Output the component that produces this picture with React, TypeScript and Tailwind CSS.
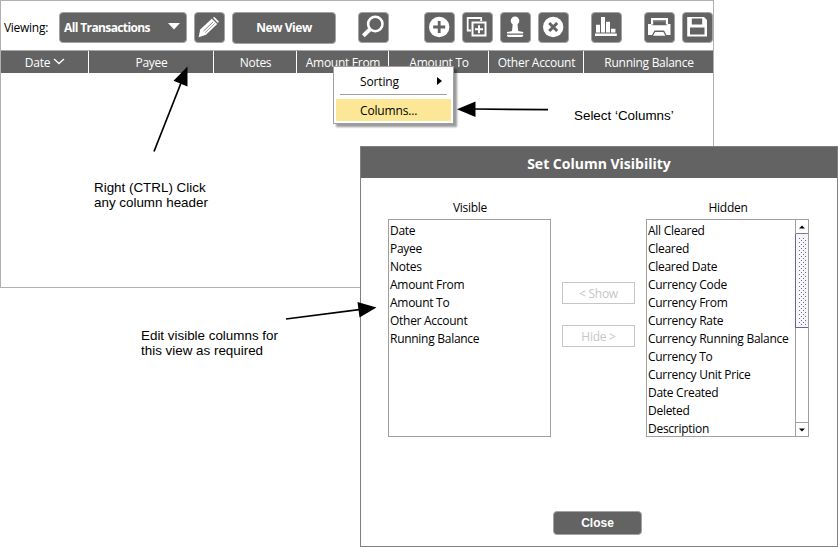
import type { ReactNode } from "react";

const visible = ["Date", "Payee", "Notes", "Amount From", "Amount To", "Other Account", "Running Balance"];
const hidden = [
  "All Cleared", "Cleared", "Cleared Date", "Currency Code", "Currency From", "Currency Rate",
  "Currency Running Balance", "Currency To", "Currency Unit Price", "Date Created", "Deleted", "Description",
];

function IconButton({ children, className = "" }: { children: ReactNode; className?: string }) {
  return (
    <button className={`h-[31px] w-[31px] shrink-0 rounded-[4px] border border-[#a3a3a3] bg-[#636363] ${className}`}>
      <svg className="-m-px block h-[31px] w-[31px]" viewBox="0 0 31 31" fill="none">{children}</svg>
    </button>
  );
}

function HeaderCell({ label, className, children }: { label: string; className: string; children?: ReactNode }) {
  return (
    <div className={`flex h-full shrink-0 items-center justify-center pt-px pl-px whitespace-nowrap ${className}`}>
      {label}
      {children}
    </div>
  );
}

function Toolbar() {
  return (
    <div className="flex h-[49px] items-start pt-[11px] pl-[3px]">
      <span className="w-[55px] shrink-0 pt-[7px] leading-[18px]">Viewing:</span>
      <button className="flex h-[31px] w-[128px] shrink-0 items-center justify-between rounded-[4px] border border-[#a3a3a3] bg-[#636363] pr-[6px] pl-[4px] font-bold text-white">
        <span className="whitespace-nowrap tracking-[-0.62px]">All Transactions</span>
        <svg width="12" height="7" viewBox="0 0 12 7" className="mb-[2px]"><path d="M0 0h12L6 6.5z" fill="#fff" /></svg>
      </button>
      <IconButton className="ml-[7px]">
        <path d="M4.6 25.2l1.6-7.6L17.8 6.8l5.4 5.2L12 22.8z" fill="#fff" />
        <path d="M18.8 5.8l1.6-.9 4.4 4.5-.8 1.7z" fill="#fff" />
        <path d="M9.5 19L19 10" stroke="#636363" strokeWidth="0.8" />
        <path d="M11 20.6L20.8 11.4" stroke="#636363" strokeWidth="0.6" />
      </IconButton>
      <button className="ml-[7px] h-[32px] w-[104px] shrink-0 rounded-[4px] border border-[#a3a3a3] bg-[#636363] pb-[1px] font-bold tracking-[-0.45px] text-white">New View</button>
      <IconButton className="ml-[22px]">
        <circle cx="17.3" cy="12" r="7.2" stroke="#fff" strokeWidth="2.6" />
        <path d="M11.8 17.5l-6.5 6.3" stroke="#fff" strokeWidth="4" />
      </IconButton>
      <IconButton className="ml-[35px]">
        <circle cx="15.2" cy="15" r="10.2" fill="#fff" />
        <path d="M15.2 9v12M9.2 15h12" stroke="#636363" strokeWidth="2.8" />
      </IconButton>
      <IconButton className="ml-[7px]">
        <path d="M9 18.5H5.7V6h13.5v3" stroke="#fff" strokeWidth="1.8" />
        <rect x="10.5" y="10.5" width="13" height="13" stroke="#fff" strokeWidth="2" />
        <path d="M17 13.2v8M13 17.2h8" stroke="#fff" strokeWidth="2" />
      </IconButton>
      <IconButton className="ml-[7px]">
        <circle cx="15" cy="8.8" r="4.3" fill="#fff" />
        <path d="M12.8 11h4.6l.8 8 5 1.1v1.5H7v-1.5l5-1.1zM7 22.7h16.2v1.2L21.9 25H8.3L7 23.9z" fill="#fff" />
      </IconButton>
      <IconButton className="ml-[7px]">
        <circle cx="15.2" cy="15" r="10.2" fill="#fff" />
        <path d="M11.2 11l8 8M19.2 11l-8 8" stroke="#636363" strokeWidth="3" />
      </IconButton>
      <IconButton className="ml-[22px]">
        <path d="M5 12.7h4v7.8H5zM10 5h4v15.5h-4zM15 9.7h4v10.8h-4zM20 16.7h4.4v3.8H20zM4 21.6h21.8V24H4z" fill="#fff" />
      </IconButton>
      <IconButton className="ml-[22px]">
        <path d="M7 6h17v6.5h-2.2v-3H9.2v3H7z" fill="#fff" />
        <path d="M4 12h3l1.3 1.2h14.4L24 12h2.5v11h-4L20 18.5H10.5L8 23H4z" fill="#fff" />
        <path d="M11.2 20h8.2l2 3.8H8.9z" fill="#fff" />
        <path d="M9 9h13" stroke="#636363" strokeWidth="1.4" />
      </IconButton>
      <IconButton className="ml-[7px]">
        <path d="M5.2 5H22l3 3V24.6H5.2z" fill="#fff" />
        <path d="M9.8 6.5h10.4v6H9.8zM8 15.6h14.5v7H8z" fill="#636363" />
      </IconButton>
    </div>
  );
}

function ContextMenu() {
  return (
    <div className="absolute top-[66px] left-[333px] h-[58px] w-[121px] border border-[#a0a0a0] bg-white p-[2px] shadow-[3px_3px_2px_rgba(0,0,0,0.4)]">
      <div className="flex h-[24px] items-center justify-between pt-px pr-[9px] pl-[24px]">
        <span className="tracking-[-0.15px]">Sorting</span>
        <svg width="5" height="8" viewBox="0 0 5 8" className="mb-[2px]"><path d="M0 0l5 4-5 4z" /></svg>
      </div>
      <div className="mx-[4px] mt-px h-px bg-[#a0a0a0]" />
      <div className="mt-[4px] flex h-[22px] items-center bg-[#fbe795] pt-[2px] pl-[24px] tracking-[-0.15px]">Columns...</div>
    </div>
  );
}

function ListRows({ items }: { items: string[] }) {
  return (
    <div className="flex-1 overflow-hidden pt-[2px] pl-[1px]">
      {items.map((item) => (
        <div key={item} className="h-[18px] leading-[18px] whitespace-nowrap">{item}</div>
      ))}
    </div>
  );
}

function Scrollbar() {
  return (
    <div className="flex w-[13px] flex-col border-l border-[#a0a0a0]">
      <div className="flex h-[14px] shrink-0 items-center justify-center border-b border-[#777799]">
        <svg width="6" height="4" viewBox="0 0 6 4"><path d="M0 3.5L3 .5l3 3z" /></svg>
      </div>
      <div className="-ml-px h-[94px] border-b border-l border-[#666699] bg-[#f7f7fa] pt-[4px] pr-[1px] pb-[2px] pl-[3px]">
        <svg className="block h-full w-full">
          <defs>
            <pattern id="grip" width="4" height="4" patternUnits="userSpaceOnUse">
              <path d="M0 0h1v1H0zM2 2h1v1H2z" fill="#666699" />
            </pattern>
          </defs>
          <rect width="100%" height="100%" fill="url(#grip)" />
        </svg>
      </div>
      <div className="flex-1" />
      <div className="flex h-[14px] items-center justify-center border-t border-[#a0a0a0]">
        <svg width="6" height="4" viewBox="0 0 6 4"><path d="M0 .5h6l-3 3z" /></svg>
      </div>
    </div>
  );
}

function Dialog() {
  return (
    <div className="absolute top-[146px] left-[360px] flex h-[401px] w-[478px] flex-col border border-[#808080] bg-white">
      <div className="flex h-[31px] w-full items-center justify-center bg-[#636363] pt-[2px] text-[14px] font-bold tracking-normal text-white">
        Set Column Visibility
      </div>
      <div className="flex w-full pt-[20px] pl-[27px]">
        <div className="w-[163px]">
          <div className="h-[21px] pt-px pl-px text-center leading-[18px]">Visible</div>
          <div className="flex h-[218px] border border-[#a0a0a0]"><ListRows items={visible} /></div>
        </div>
        <div className="ml-[11px] flex w-[73px] flex-col gap-[21px] pt-[84px]">
          <button className="h-[22px] border border-[#c6c6c6] pt-[2px] text-[#c6c6c6]">&lt; Show</button>
          <button className="h-[22px] border border-[#c6c6c6] pt-[2px] text-[#c6c6c6]">Hide &gt;</button>
        </div>
        <div className="ml-[11px] w-[163px]">
          <div className="h-[21px] pt-px pl-px text-center leading-[18px]">Hidden</div>
          <div className="flex h-[218px] border border-[#a0a0a0]"><ListRows items={hidden} /><Scrollbar /></div>
        </div>
      </div>
      <button className="mt-[74px] ml-[192px] h-[24px] w-[89px] shrink-0 rounded-[4px] border border-[#a3a3a3] bg-[#636363] pb-px font-['Liberation_Sans',sans-serif] text-[12px] font-bold tracking-normal text-white">Close</button>
    </div>
  );
}

export default function App() {
  return (
    <div className="relative h-[547px] w-[838px] overflow-hidden bg-white font-['Open_Sans','Noto_Sans',sans-serif] text-[12px] leading-[18px] tracking-[-0.28px] text-black">
      <div className="flex h-[288px] w-[714px] flex-col border border-[#b0b0b0] bg-white">
        <Toolbar />
        <div className="flex h-[23px] shrink-0 items-center divide-x divide-white border-t border-[#a8a8a8] bg-[#636363] text-white">
          <HeaderCell label="Date" className="w-[88px]">
            <svg width="12" height="7" viewBox="0 0 12 7" fill="none" className="mb-[2px] ml-[3px]"><path d="M1 1l5 4.6L11 1" stroke="#fff" strokeWidth="1.3" /></svg>
          </HeaderCell>
          <HeaderCell label="Payee" className="w-[125px]" />
          <HeaderCell label="Notes" className="w-[83px]" />
          <HeaderCell label="Amount From" className="w-[92px]" />
          <HeaderCell label="Amount To" className="w-[100px]" />
          <HeaderCell label="Other Account" className="w-[95px]" />
          <HeaderCell label="Running Balance" className="w-[129px]" />
        </div>
      </div>
      <ContextMenu />
      <Dialog />
      <div className="absolute top-[180px] left-[94px] font-['Liberation_Sans',sans-serif] text-[13.4px] leading-[15px] tracking-normal whitespace-nowrap">Right (CTRL) Click<br />any column header</div>
      <div className="absolute top-[108px] left-[574px] font-['Liberation_Sans',sans-serif] text-[13.4px] leading-[15px] tracking-normal whitespace-nowrap">Select ‘Columns’</div>
      <div className="absolute top-[328px] left-[141px] font-['Liberation_Sans',sans-serif] text-[13.4px] leading-[15px] tracking-normal whitespace-nowrap">Edit visible columns for<br />this view as required</div>
      <svg className="pointer-events-none absolute inset-0" width="838" height="547" viewBox="0 0 838 547">
        <g stroke="#000" strokeWidth="1.7">
          <path d="M154 151.5L181 83" />
          <path d="M548 109.7L474 109" />
          <path d="M286 319L359 309.7" />
        </g>
        <path d="M187.5 66.5L187.5 86.5L173.5 80.8zM457 109.2L475.5 101.5V117zM376.5 307.5L357.5 302L359.5 317.5z" />
      </svg>
    </div>
  );
}
